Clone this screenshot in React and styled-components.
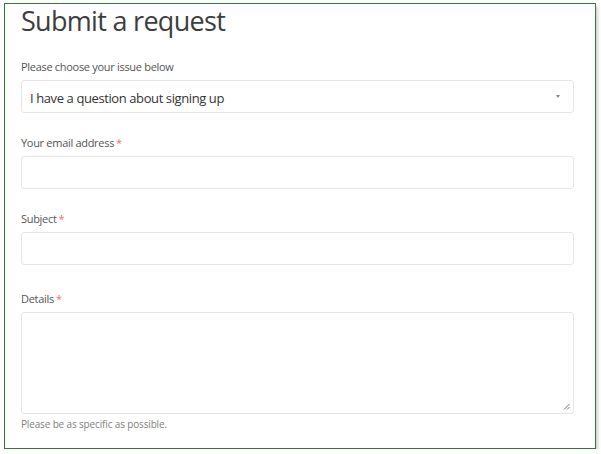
import styled, { createGlobalStyle } from "styled-components";

const GlobalStyle = createGlobalStyle`
  html, body {
    margin: 0;
    padding: 0;
    background: #fff;
  }
  body {
    font-family: "Open Sans", "Noto Sans", sans-serif;
    color: #333;
  }
`;

const Frame = styled.div`
  box-sizing: border-box;
  width: 592px;
  height: 446px;
  margin: 3px 0 0 4px;
  border: 1px solid #2e7d32;
  box-shadow: 2px 3px 3px rgba(0, 0, 0, 0.18);
  padding: 1px 21px 0 16px;
  display: flex;
  flex-direction: column;
`;

const Title = styled.h1`
  margin: 0;
  font-size: 27px;
  font-weight: 400;
  line-height: 32px;
  color: #3d3d3d;
  letter-spacing: -0.7px;
`;

const Field = styled.div`
  display: flex;
  flex-direction: column;
  margin-top: ${(p) => p.$top}px;
`;

const Label = styled.label`
  font-size: 11px;
  line-height: 16px;
  color: #555;
  letter-spacing: -0.3px;
  margin-bottom: 5px;
`;

const Required = styled.span`
  color: #e57373;
  margin-left: 2px;
`;

const Box = styled.div`
  box-sizing: border-box;
  height: ${(p) => p.$h}px;
  border: 1px solid #e6e6e6;
  border-radius: 3px;
  background: #fff;
  position: relative;
  display: flex;
  align-items: center;
  padding: 2px 9px 0 8px;
`;

const SelectText = styled.span`
  font-size: 13px;
  letter-spacing: -0.4px;
  color: #333;
  flex: 1;
`;

const Caret = styled.span`
  width: 0;
  height: 0;
  border-left: 2.5px solid transparent;
  border-right: 2.5px solid transparent;
  border-top: 3px solid #888;
  margin: 0 4px 2px 0;
`;

const Grip = styled.svg`
  position: absolute;
  right: 3px;
  bottom: 3px;
`;

const Hint = styled.div`
  font-size: 10px;
  line-height: 14px;
  letter-spacing: -0.15px;
  color: #808080;
  margin-top: 3px;
`;

export default function App() {
  return (
    <>
      <GlobalStyle />
      <Frame>
        <Title>Submit a request</Title>

        <Field $top={22}>
          <Label>Please choose your issue below</Label>
          <Box $h={33}>
            <SelectText>I have a question about signing up</SelectText>
            <Caret />
          </Box>
        </Field>

        <Field $top={22}>
          <Label>
            Your email address<Required>*</Required>
          </Label>
          <Box $h={33} />
        </Field>

        <Field $top={22}>
          <Label>
            Subject<Required>*</Required>
          </Label>
          <Box $h={33} />
        </Field>

        <Field $top={26}>
          <Label>
            Details<Required>*</Required>
          </Label>
          <Box $h={102}>
            <Grip width="7" height="7" viewBox="0 0 7 7">
              <path d="M6.5 1 L1 6.5 M6.5 4 L4 6.5" stroke="#777" strokeWidth="1" />
            </Grip>
          </Box>
          <Hint>Please be as specific as possible.</Hint>
        </Field>
      </Frame>
    </>
  );
}
